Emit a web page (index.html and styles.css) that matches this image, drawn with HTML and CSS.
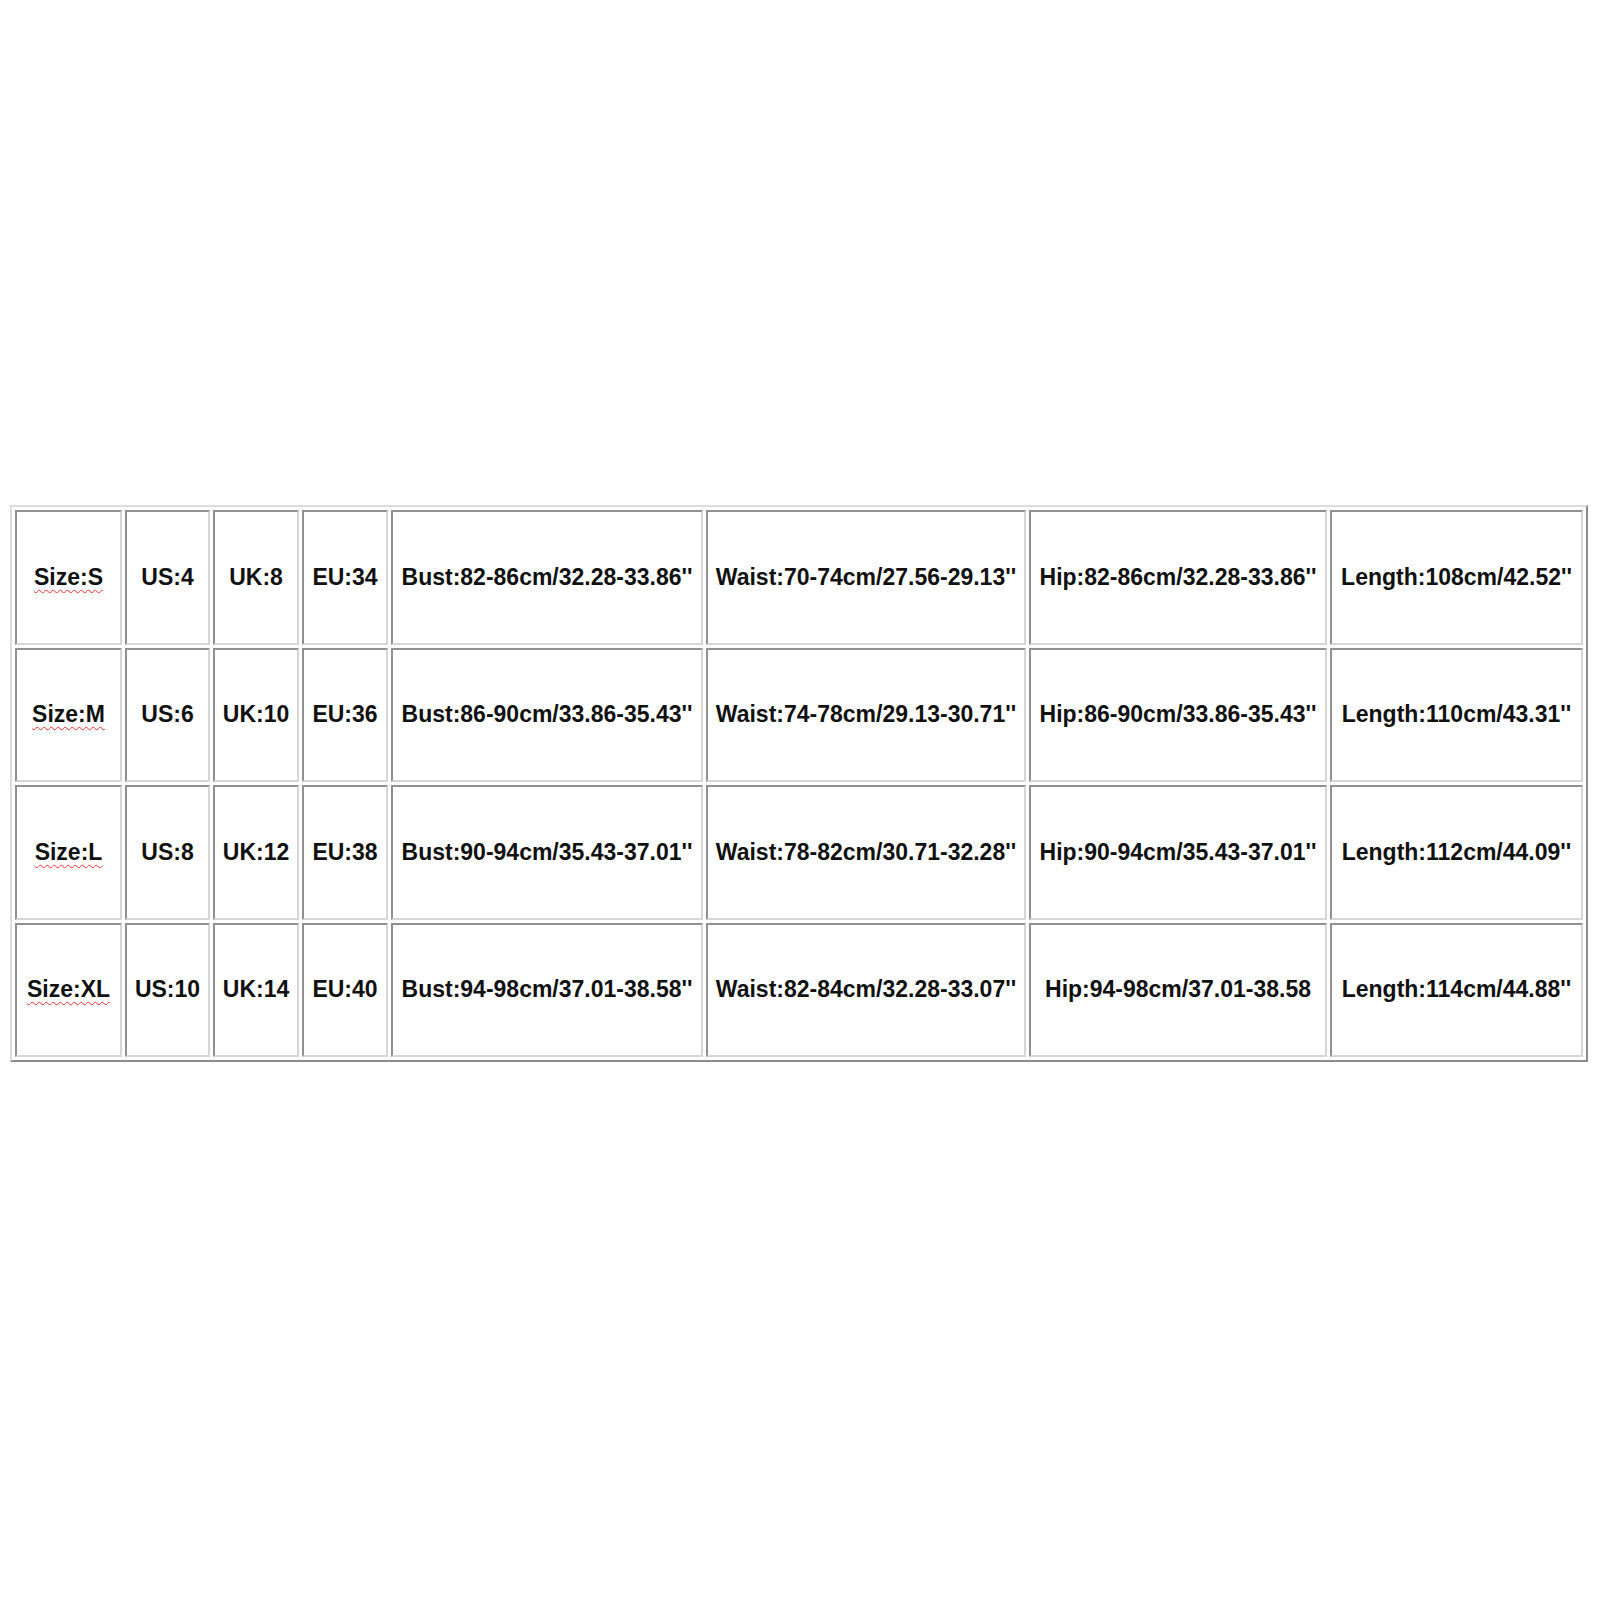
FILE: index.html
```html
<!DOCTYPE html>
<html>
<head>
<meta charset="utf-8">
<link rel="stylesheet" href="styles.css">
</head>
<body>
<table class="size-chart">
  <colgroup>
    <col class="c-size">
    <col class="c-us">
    <col class="c-uk">
    <col class="c-eu">
    <col class="c-bust">
    <col class="c-waist">
    <col class="c-hip">
    <col class="c-length">
  </colgroup>
  <tbody>
    <tr>
      <td><span class="squiggle">Size:S</span></td>
      <td>US:4</td>
      <td>UK:8</td>
      <td>EU:34</td>
      <td>Bust:82-86cm/32.28-33.86''</td>
      <td>Waist:70-74cm/27.56-29.13''</td>
      <td>Hip:82-86cm/32.28-33.86''</td>
      <td>Length:108cm/42.52''</td>
    </tr>
    <tr>
      <td><span class="squiggle">Size:M</span></td>
      <td>US:6</td>
      <td>UK:10</td>
      <td>EU:36</td>
      <td>Bust:86-90cm/33.86-35.43''</td>
      <td>Waist:74-78cm/29.13-30.71''</td>
      <td>Hip:86-90cm/33.86-35.43''</td>
      <td>Length:110cm/43.31''</td>
    </tr>
    <tr>
      <td><span class="squiggle">Size:L</span></td>
      <td>US:8</td>
      <td>UK:12</td>
      <td>EU:38</td>
      <td>Bust:90-94cm/35.43-37.01''</td>
      <td>Waist:78-82cm/30.71-32.28''</td>
      <td>Hip:90-94cm/35.43-37.01''</td>
      <td>Length:112cm/44.09''</td>
    </tr>
    <tr>
      <td><span class="squiggle">Size:XL</span></td>
      <td>US:10</td>
      <td>UK:14</td>
      <td>EU:40</td>
      <td>Bust:94-98cm/37.01-38.58''</td>
      <td>Waist:82-84cm/32.28-33.07''</td>
      <td>Hip:94-98cm/37.01-38.58</td>
      <td>Length:114cm/44.88''</td>
    </tr>
  </tbody>
</table>
</body>
</html>
```

FILE: styles.css
```css
html, body {
  margin: 0;
  padding: 0;
  background: #ffffff;
}

body {
  padding: 505px 0 0 10px;
  font-family: "Liberation Sans", Arial, sans-serif;
  color: #111111;
}

.size-chart {
  table-layout: fixed;
  border-collapse: separate;
  border-spacing: 3px 3px;
  border-style: solid;
  border-width: 2px;
  border-color: #dcdcdc #8c8c8c #8c8c8c #dcdcdc;
  width: 1578px;
}

.c-size { width: 107px; }
.c-us { width: 85px; }
.c-uk { width: 86px; }
.c-eu { width: 86px; }
.c-bust { width: 312px; }
.c-waist { width: 320px; }
.c-hip { width: 298px; }
.c-length { width: 253px; }

.size-chart td {
  box-sizing: border-box;
  height: 134.5px;
  padding: 0;
  border-style: solid;
  border-width: 2px;
  border-color: #909090 #d6d6d6 #d6d6d6 #909090;
  text-align: center;
  vertical-align: middle;
  font-size: 23px;
  font-weight: bold;
  white-space: nowrap;
  overflow: hidden;
}

.squiggle {
  text-decoration-line: underline;
  text-decoration-style: wavy;
  text-decoration-color: #e8322f;
  text-decoration-thickness: 1px;
  text-underline-offset: 4px;
}
```
